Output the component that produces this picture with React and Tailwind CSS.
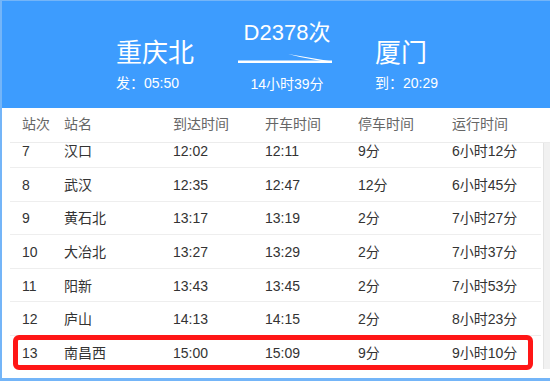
import React from 'react'

const stops = [
  ['7', '汉口', '12:02', '12:11', '9分', '6小时12分'],
  ['8', '武汉', '12:35', '12:47', '12分', '6小时45分'],
  ['9', '黄石北', '13:17', '13:19', '2分', '7小时27分'],
  ['10', '大冶北', '13:27', '13:29', '2分', '7小时37分'],
  ['11', '阳新', '13:43', '13:45', '2分', '7小时53分'],
  ['12', '庐山', '14:13', '14:15', '2分', '8小时23分'],
  ['13', '南昌西', '15:00', '15:09', '9分', '9小时10分'],
]

const cols = ['w-[54px] pl-[12px]', 'w-[109px]', 'w-[92px]', 'w-[93px]', 'w-[94px]', 'flex-1']
const heads = ['站次', '站名', '到达时间', '开车时间', '停车时间', '运行时间']

const Arrow = () => (
  <svg width="94" height="11" viewBox="0 0 94 11" className="block">
    <rect x="0" y="7.5" width="94" height="2.5" fill="#ffffff" />
    <polygon points="50,1 94,8.5 94,10 62,4" fill="#ffffff" />
  </svg>
)

const App = () => {
  return (
    <div
      className="relative w-[550px] h-[381px] overflow-hidden bg-white border-l-2 border-t border-b-[3px] border-[#74b5f8] text-[14px]"
      style={{ fontFamily: '"Liberation Sans", "Noto Sans CJK SC", sans-serif' }}
    >
      {/* top banner */}
      <div className="h-[107px] bg-[#3d9cfe] text-white flex pl-[114px]">
        <div className="w-[122px] pt-[39px]">
          <div className="text-[26px] leading-none">重庆北</div>
          <div className="mt-[10px] leading-none">发：05:50</div>
        </div>
        <div className="w-[94px] pt-[21px] flex flex-col items-center">
          <div className="text-[22px] leading-none pl-[4px]">D2378次</div>
          <div className="mt-[9px]"><Arrow /></div>
          <div className="mt-[13px] leading-none pl-[4px]">14小时39分</div>
        </div>
        <div className="ml-[43px] pt-[39px]">
          <div className="text-[26px] leading-none">厦门</div>
          <div className="mt-[10px] leading-none">到：20:29</div>
        </div>
      </div>

      {/* table head */}
      <div className="ml-[8px] h-[35px] flex items-center border-b border-[#ececec] text-[#666] pb-[1px]">
        {heads.map((h, i) => (
          <div key={h} className={cols[i]}>{h}</div>
        ))}
      </div>

      {/* table body */}
      <div className="h-[226px] flex overflow-hidden">
        <div className="ml-[8px] w-[531px] overflow-hidden">
          <div className="-mt-[8.6px]">
            {stops.map((r) => (
              <div key={r[0]} className="h-[33.6px] flex items-center pt-[2px] border-b border-[#eeeeee] text-[#333]">
                {r.map((c, i) => (
                  <div key={i} className={cols[i]}>{c}</div>
                ))}
              </div>
            ))}
          </div>
        </div>
        <div className="ml-[2px] flex-1 bg-[#f1f1f1] border-l border-[#e4e4e4]" />
      </div>

      {/* highlight */}
      <div className="absolute left-[11px] top-[334px] w-[520px] h-[35px] border-[5px] border-[#ff1616] rounded-[6px]" />
    </div>
  )
}

export default App
